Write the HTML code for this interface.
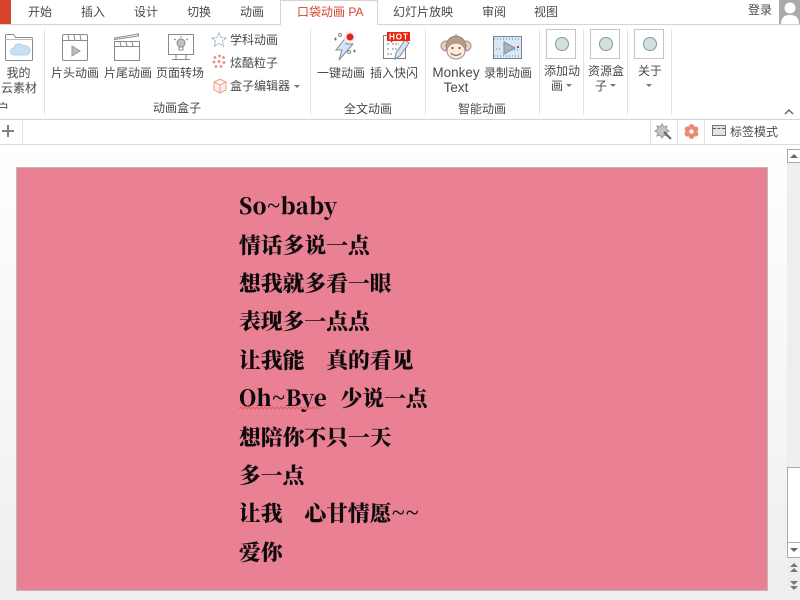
<!DOCTYPE html>
<html><head><meta charset="utf-8">
<style>
html,body{margin:0;padding:0;width:800px;height:600px;overflow:hidden;background:#fff}
body{position:relative;font-family:"Liberation Sans","Noto Sans CJK SC",sans-serif;font-size:12px;color:#4a4a4a}
.a{position:absolute;white-space:nowrap;line-height:16px}
.c{text-align:center}
.b{position:absolute}
.v{position:absolute;width:1px;background:#e1e1e1}
.l{position:absolute;left:239px;font-family:"Noto Serif CJK SC","Liberation Serif",serif;font-weight:900;font-size:21.8px;line-height:30px;color:#0d0a0b;white-space:pre}
.l span{letter-spacing:.3px}
svg{position:absolute;overflow:visible}
.box{position:absolute;top:29px;width:28px;height:28px;border:1px solid #c6c6c6;background:#fff}
.box i{position:absolute;left:8px;top:7px;width:12px;height:12px;border:1px solid #7f9aa0;border-radius:50%;background:#d3e0de}
.tri{position:absolute;width:0;height:0;border-left:3px solid transparent;border-right:3px solid transparent;border-top:3px solid #777}
</style></head>
<body>
<!-- tab bar -->
<div class="b" style="left:0;top:0;width:11px;height:24px;background:#d6432c"></div>
<div class="b" style="left:0;top:24px;width:800px;height:1px;background:#d4d4d4"></div>
<div class="b" style="left:280px;top:0;width:98px;height:25px;background:#fff;border:1px solid #d4d4d4;border-bottom:none;box-sizing:border-box"></div>
<div class="a" style="left:28px;top:4px">开始</div>
<div class="a" style="left:81px;top:4px">插入</div>
<div class="a" style="left:134px;top:4px">设计</div>
<div class="a" style="left:187px;top:4px">切换</div>
<div class="a" style="left:240px;top:4px">动画</div>
<div class="a" style="left:297px;top:4px;color:#d6432c">口袋动画 PA</div>
<div class="a" style="left:393px;top:4px">幻灯片放映</div>
<div class="a" style="left:482px;top:4px">审阅</div>
<div class="a" style="left:534px;top:4px">视图</div>
<div class="a" style="left:748px;top:2px">登录</div>
<svg style="left:779px;top:0" width="21" height="24"><rect width="21" height="24" fill="#aaa"/><circle cx="11" cy="8" r="5.500" fill="#fff"/><path d="M2 24c0-7 4-9 9-9s9 2 9 9z" fill="#fff"/></svg>

<!-- ribbon separators -->
<div class="v" style="left:44px;top:29px;height:86px"></div>
<div class="v" style="left:310px;top:29px;height:86px"></div>
<div class="v" style="left:425px;top:29px;height:86px"></div>
<div class="v" style="left:539px;top:29px;height:86px"></div>
<div class="v" style="left:583px;top:29px;height:86px"></div>
<div class="v" style="left:627px;top:29px;height:86px"></div>
<div class="v" style="left:671px;top:29px;height:86px"></div>

<!-- cloud folder -->
<svg style="left:0;top:31px" width="40" height="36" fill="none" stroke="#8a8a8a">
<path d="M5.500 5.500V4.500a1 1 0 0 1 1-1h7l2 3h16a1 1 0 0 1 1 1v21a1 1 0 0 1-1 1h-25a1 1 0 0 1-1-1z"/><path d="M5.500 8.500h27" stroke="#bbb"/>
<path d="M14 24a3.500 3.500 0 0 1 0-7 5 5 0 0 1 9-2 4.500 4.500 0 0 1 4 9z" fill="#c5dff5" stroke="#b5d0e6"/></svg>
<div class="a c" style="left:0;top:65px;width:37px">我的</div>
<div class="a c" style="left:-1px;top:80px;width:40px">云素材</div>
<div class="a" style="left:-3px;top:100px">户</div>

<!-- clip icons -->
<svg style="left:60px;top:32px" width="30" height="30" fill="none" stroke="#8a8a8a">
<rect x="2.500" y="2.500" width="25" height="26" rx="1.500"/><path d="M2.500 8.500h25M8 3l1 5M14 3l1 5M20 3l1 5"/><path d="M12 14l8 5-8 5z" fill="#bbb" stroke="#999"/></svg>
<svg style="left:112px;top:32px" width="30" height="30" fill="none" stroke="#8a8a8a">
<path d="M2.500 7.500l24-3.500v-2l-24 4zM2.500 9.500h25v19h-25zM2.500 14.500h25M8 10l1 4M14 10l1 4M20 10l1 4"/></svg>
<svg style="left:166px;top:32px" width="30" height="30" fill="none" stroke="#8a8a8a">
<rect x="2.500" y="2.500" width="25" height="20" /><circle cx="15" cy="11" r="4" fill="#c0c0c0"/><path d="M13 15h4v3h-4zM15 4v2M8 7l2 1M22 7l-2 1M10 22.500v5M20 22.500v5M6 27.500h18"/></svg>
<div class="a" style="left:51px;top:65px">片头动画</div>
<div class="a" style="left:104px;top:65px">片尾动画</div>
<div class="a" style="left:156px;top:65px">页面转场</div>
<div class="a" style="left:153px;top:100px">动画盒子</div>

<!-- small items -->
<svg style="left:212px;top:32px" width="16" height="14" fill="none" stroke="#8fb0c0" stroke-dasharray="2 .7"><path d="M7 1l2 4.500 5 .5-3.500 3 1 5L7 11.500 2.500 14l1-5L0 6l5-.5z"/></svg>
<svg style="left:212px;top:54px" width="15" height="15" fill="#ea8a78"><circle cx="3" cy="3.500" r="1.400"/><circle cx="7.500" cy="2" r="1.400"/><circle cx="11.500" cy="3.500" r="1.400"/><circle cx="2" cy="8" r="1.400"/><circle cx="7" cy="7.500" r="1.400"/><circle cx="12" cy="8.500" r="1.400"/><circle cx="4" cy="12.500" r="1.400"/><circle cx="9" cy="12.500" r="1.400"/></svg>
<svg style="left:213px;top:78px" width="15" height="15" fill="#fdeee8" stroke="#eba08c"><path d="M1 4l6-3 6 3v8l-6 3-6-3zM1 4l6 3 6-3M7 7v8"/></svg>
<div class="a" style="left:230px;top:32px">学科动画</div>
<div class="a" style="left:230px;top:55px">炫酷粒子</div>
<div class="a" style="left:230px;top:78px">盒子编辑器</div>
<div class="tri" style="left:294px;top:85px"></div>

<!-- one-key -->
<svg style="left:330px;top:30px" width="36" height="32">
<path d="M17 6l-11 14h6l-3 10 14-16h-7l6-8z" fill="#cfe6fa" stroke="#8a8a8a"/>
<circle cx="20" cy="7.500" r="6" fill="#f0f0f0"/><circle cx="20" cy="7" r="3.500" fill="#ef1c1c"/>
<circle cx="10" cy="5" r="1.500" fill="none" stroke="#888"/><path d="M4 9h3M5.500 7.500v3M23 21h3M24.500 19.500v3" stroke="#777"/><circle cx="19" cy="22" r="1.500" fill="none" stroke="#888"/></svg>
<svg style="left:380px;top:30px" width="32" height="32" fill="none" stroke="#808080">
<path d="M3.500 5.500h22v23h-22z"/><path d="M7 14h3M12 14h7M7 19h3M12 19h6M7 24h5" stroke-dasharray="2 1"/>
<path d="M25 10l4 3-9 13-5 3 1-6z" fill="#cfe6fa" stroke="#8a8a8a"/>
<path d="M7 2h23v9H13l-2 2v-2H7z" fill="#ee2211" stroke="none"/>
<text x="9" y="9.500" font-family="Liberation Sans" font-weight="700" font-size="8" letter-spacing="1" fill="#fff" stroke="none">HOT</text></svg>
<div class="a" style="left:317px;top:65px">一键动画</div>
<div class="a" style="left:370px;top:65px">插入快闪</div>
<div class="a" style="left:344px;top:101px">全文动画</div>

<!-- monkey -->
<svg style="left:440px;top:33px" width="32" height="30">
<circle cx="6" cy="13" r="5" fill="#f8c9c4" stroke="#a09388"/><circle cx="26" cy="13" r="5" fill="#f8c9c4" stroke="#a09388"/>
<ellipse cx="16" cy="14" rx="10" ry="11" fill="#b99c84" stroke="#968a7e"/>
<ellipse cx="16" cy="18" rx="9" ry="8" fill="#fcebdc" stroke="#a09388"/><path d="M11 20c2 3 8 3 10 0" fill="none" stroke="#66564b"/>
<circle cx="12.500" cy="15" r="1" fill="#444"/><circle cx="19.500" cy="15" r="1" fill="#444"/><path d="M16 3v-2" stroke="#968a7e"/></svg>
<svg style="left:493px;top:36px" width="29" height="23">
<rect x=".5" y=".5" width="28" height="22" fill="#d4e9f9" stroke="#808080"/><path d="M11 6l11 6-11 6z" fill="#a8b4ba" stroke="#8a8a8a"/>
<path d="M3 13h6M21 14h5M1 3h27M1 20h27" stroke="#777" stroke-dasharray="1 2"/><rect x="24" y="10" width="2" height="2" fill="#e33"/></svg>
<div class="a c" style="left:430px;top:65px;width:52px;font-size:13.500px">Monkey</div>
<div class="a c" style="left:430px;top:80px;width:52px;font-size:13.500px">Text</div>
<div class="a" style="left:484px;top:65px">录制动画</div>
<div class="a" style="left:458px;top:101px">智能动画</div>

<!-- boxes -->
<div class="box" style="left:546px"><i></i></div>
<div class="box" style="left:590px"><i></i></div>
<div class="box" style="left:634px"><i></i></div>
<div class="a c" style="left:541px;top:63px;width:42px">添加动</div>
<div class="a" style="left:551px;top:78px">画</div><div class="tri" style="left:566px;top:84px"></div>
<div class="a c" style="left:585px;top:63px;width:42px">资源盒</div>
<div class="a" style="left:595px;top:78px">子</div><div class="tri" style="left:610px;top:84px"></div>
<div class="a c" style="left:629px;top:63px;width:42px">关于</div>
<div class="tri" style="left:646px;top:84px"></div>
<svg style="left:784px;top:109px" width="10" height="6" fill="none" stroke="#666" stroke-width="1.500"><path d="M1 5l4-4 4 4"/></svg>

<!-- toolbar -->
<div class="b" style="left:0;top:119px;width:800px;height:1px;background:#d4d4d4"></div>
<div class="b" style="left:0;top:144px;width:800px;height:1px;background:#dcdcdc"></div>
<div class="v" style="left:22px;top:120px;height:24px"></div>
<div class="v" style="left:650px;top:120px;height:24px"></div>
<div class="v" style="left:677px;top:120px;height:24px"></div>
<div class="v" style="left:704px;top:120px;height:24px"></div>
<svg style="left:2px;top:125px" width="12" height="12"><path d="M0 6h12M6 0v12" stroke="#7b8385" stroke-width="2"/></svg>
<svg style="left:655px;top:123px" width="17" height="17"><path d="M2 3l3 1 2-3 2 3 3-1-1 3 3 2-3 2 1 3-3-1-2 3-2-3-3 1 1-3-3-2 3-2z" fill="#c9c3cc" stroke="#999"/><path d="M9 9l7 7" stroke="#666" stroke-width="2"/></svg>
<svg style="left:684px;top:124px" width="15" height="15" fill="#ea8a72"><circle cx="7.500" cy="7.500" r="3.700" fill="none" stroke="#ea8a72" stroke-width="3"/><circle cx="7.500" cy="2.900" r="2.800"/><circle cx="7.500" cy="12.100" r="2.800"/><circle cx="3.400" cy="5.200" r="2.800"/><circle cx="11.600" cy="5.200" r="2.800"/><circle cx="3.400" cy="9.800" r="2.800"/><circle cx="11.600" cy="9.800" r="2.800"/><circle cx="7.500" cy="7.500" r="2.200" fill="#fff"/></svg>
<svg style="left:712px;top:125px" width="15" height="12"><rect x=".5" y=".5" width="13" height="10" fill="#e2e2e2" stroke="#777"/><path d="M1 3.500h3M5.500 3.500h3M10 3.500h3" stroke="#555"/></svg>
<div class="a" style="left:730px;top:124px">标签模式</div>

<!-- work area -->
<div class="b" style="left:0;top:145px;width:800px;height:455px;background:linear-gradient(#fff,#eee)"></div>
<div class="b" style="left:16px;top:167px;width:752px;height:424px;box-sizing:border-box;background:#e98094;border:1px solid #bdb5b7"></div>
<div class="l" style="top:191px"><span>So~baby</span></div>
<div class="l" style="top:230px">情话多说一点</div>
<div class="l" style="top:268px">想我就多看一眼</div>
<div class="l" style="top:306px">表现多一点点</div>
<div class="l" style="top:345px">让我能　真的看见</div>
<div class="l" style="top:383px"><span style="letter-spacing:.2px;word-spacing:1.200px">Oh~Bye  </span>少说一点</div>
<div class="l" style="top:422px">想陪你不只一天</div>
<div class="l" style="top:460px">多一点</div>
<div class="l" style="top:498px">让我　心甘情愿<span style="letter-spacing:.5px">~~</span></div>
<div class="l" style="top:537px">爱你</div>
<svg style="left:239px;top:406px" width="92" height="5"><path d="M0 3l2-2 2 2 2-2 2 2 2-2 2 2 2-2 2 2 2-2 2 2 2-2 2 2 2-2 2 2 2-2 2 2 2-2 2 2 2-2 2 2 2-2 2 2 2-2 2 2 2-2 2 2 2-2 2 2 2-2 2 2 2-2 2 2 2-2 2 2 2-2 2 2 2-2 2 2 2-2 2 2" fill="none" stroke="#e06060"/></svg>

<!-- scrollbar -->
<div class="b" style="left:787px;top:149px;width:13px;height:451px;background:#eeeeee"></div>
<div class="b" style="left:787px;top:149px;width:13px;height:14px;background:#fff;border:1px solid #ababab;border-right:none;box-sizing:border-box"></div>
<svg style="left:790px;top:153px" width="8" height="5"><path d="M0 5l4-4 4 4z" fill="#666"/></svg>
<div class="b" style="left:787px;top:467px;width:13px;height:76px;background:#fff;border:1px solid #ababab;border-right:none;box-sizing:border-box"></div>
<div class="b" style="left:787px;top:543px;width:13px;height:15px;background:#fff;border:1px solid #ababab;border-top:none;border-right:none;box-sizing:border-box"></div>
<svg style="left:790px;top:548px" width="8" height="5"><path d="M0 0l4 4 4-4z" fill="#666"/></svg>
<svg style="left:790px;top:563px" width="8" height="10" fill="#777"><path d="M0 4l4-4 4 4zM0 9l4-4 4 4z"/></svg>
<svg style="left:790px;top:581px" width="8" height="10" fill="#777"><path d="M0 0l4 4 4-4zM0 5l4 4 4-4z"/></svg>
</body></html>
